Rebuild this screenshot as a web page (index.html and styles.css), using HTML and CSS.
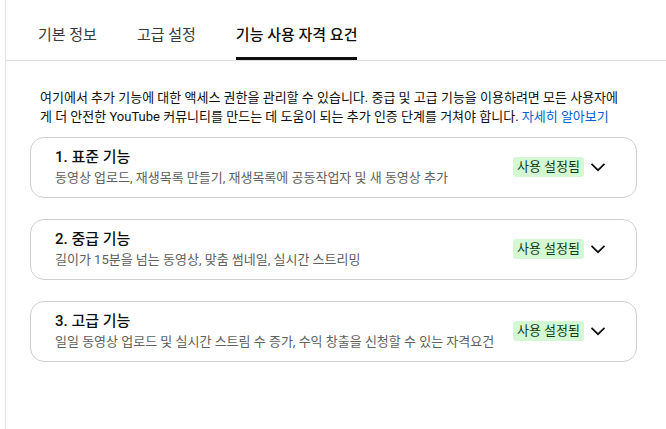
FILE: index.html
```html
<!DOCTYPE html>
<html lang="ko">
<head>
<meta charset="utf-8">
<link rel="stylesheet" href="styles.css">
</head>
<body>
<div class="page">
  <nav class="tabs">
    <div class="tab">기본 정보</div>
    <div class="tab">고급 설정</div>
    <div class="tab active">기능 사용 자격 요건</div>
  </nav>
  <main class="content">
    <p class="intro">여기에서 추가 기능에 대한 액세스 권한을 관리할 수 있습니다. 중급 및 고급 기능을 이용하려면 모든 사용자에게 더 안전한 YouTube 커뮤니티를 만드는 데 도움이 되는 추가 인증 단계를 거쳐야 합니다. <a class="link" href="#">자세히 알아보기</a></p>
    <div class="cards">
      <section class="card">
        <div class="card-text">
          <div class="card-title">1. 표준 기능</div>
          <div class="card-desc">동영상 업로드, 재생목록 만들기, 재생목록에 공동작업자 및 새 동영상 추가</div>
        </div>
        <span class="badge">사용 설정됨</span>
        <svg class="chevron" viewBox="0 0 24 24"><path d="M5.5 8.8 12 15.2l6.5-6.4" fill="none" stroke="#0f0f0f" stroke-width="1.7"/></svg>
      </section>
      <section class="card">
        <div class="card-text">
          <div class="card-title">2. 중급 기능</div>
          <div class="card-desc">길이가 15분을 넘는 동영상, 맞춤 썸네일, 실시간 스트리밍</div>
        </div>
        <span class="badge">사용 설정됨</span>
        <svg class="chevron" viewBox="0 0 24 24"><path d="M5.5 8.8 12 15.2l6.5-6.4" fill="none" stroke="#0f0f0f" stroke-width="1.7"/></svg>
      </section>
      <section class="card">
        <div class="card-text">
          <div class="card-title">3. 고급 기능</div>
          <div class="card-desc">일일 동영상 업로드 및 실시간 스트림 수 증가, 수익 창출을 신청할 수 있는 자격요건</div>
        </div>
        <span class="badge">사용 설정됨</span>
        <svg class="chevron" viewBox="0 0 24 24"><path d="M5.5 8.8 12 15.2l6.5-6.4" fill="none" stroke="#0f0f0f" stroke-width="1.7"/></svg>
      </section>
    </div>
  </main>
</div>
</body>
</html>
```
FILE: styles.css
```css
* { box-sizing: border-box; }
html, body { margin: 0; padding: 0; background: #fff; }
body {
  font-family: Roboto, "Noto Sans CJK KR", sans-serif;
  color: #0f0f0f;
}
.page {
  margin-left: 5px;
  border-left: 1px solid #e3e3e3;
  height: 429px;
}
.tabs {
  display: flex;
  gap: 40px;
  height: 61px;
  padding-left: 32px;
  border-bottom: 1px solid #e0e0e0;
  align-items: flex-end;
}
.tab {
  font-size: 15px;
  line-height: 22px;
  color: #3a3a3a;
  padding-bottom: 11px;
  border-bottom: 3px solid transparent;
}
.tab.active {
  color: #0f0f0f;
  font-weight: 500;
  border-bottom-color: #0f0f0f;
}
.content {
  padding: 27px 29px 0 24px;
}
.intro {
  margin: 0 12px 11px 10px;
  font-size: 13px;
  line-height: 19px;
  color: #0f0f0f;
  word-break: break-all;
}
.link { color: #065fd4; text-decoration: none; }
.cards {
  display: flex;
  flex-direction: column;
  gap: 21px;
}
.card {
  display: flex;
  align-items: center;
  border: 1px solid #cfcfcf;
  border-radius: 14px;
  padding: 8px 26px 9px 24px;
}
.card-text { flex: 1; }
.card-title {
  font-size: 15px;
  font-weight: 500;
  line-height: 22px;
  color: #0f0f0f;
}
.card-desc {
  font-size: 13px;
  line-height: 20px;
  color: #606060;
}
.badge {
  background: #d4f7d4;
  color: #0f3d1a;
  font-size: 13px;
  line-height: 20px;
  padding: 0 4px;
  border-radius: 3px;
  margin-right: 2px;
}
.chevron { width: 24px; height: 24px; display: block; }
```
